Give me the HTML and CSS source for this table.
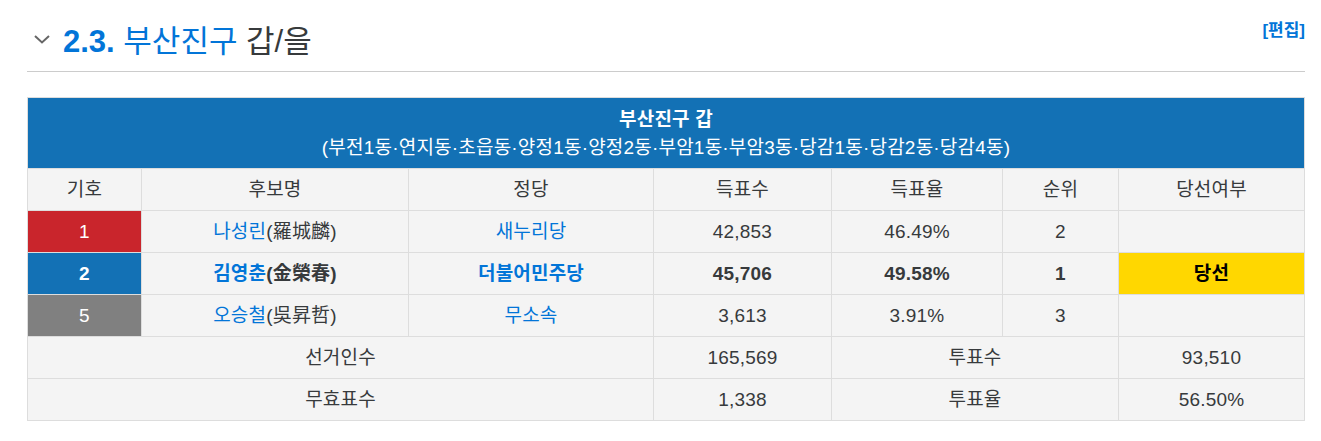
FILE: index.html
```html
<!DOCTYPE html>
<html lang="ko">
<head>
<meta charset="utf-8">
<title>2.3. 부산진구 갑/을</title>
<link rel="stylesheet" href="styles.css">
</head>
<body>
<div class="page">
  <div class="section-head">
    <svg class="chev" width="16" height="9" viewBox="0 0 16 9" aria-hidden="true"><path d="M1 1 L8 7.5 L15 1" fill="none" stroke="#666" stroke-width="2"/></svg>
    <h2 class="title"><a class="num" href="#">2.3.</a> <span class="link">부산진구</span> 갑/을</h2>
    <a class="edit" href="#">[편집]</a>
  </div>

  <table class="result">
    <colgroup>
      <col class="c1"><col class="c2"><col class="c3"><col class="c4"><col class="c5"><col class="c6"><col class="c7">
    </colgroup>
    <tr>
      <th colspan="7" class="district">
        <div class="d-name">부산진구 갑</div>
        <div class="d-dongs">(부전1동·연지동·초읍동·양정1동·양정2동·부암1동·부암3동·당감1동·당감2동·당감4동)</div>
      </th>
    </tr>
    <tr>
      <td>기호</td><td>후보명</td><td>정당</td><td>득표수</td><td>득표율</td><td>순위</td><td>당선여부</td>
    </tr>
    <tr>
      <td class="sym red">1</td>
      <td><a class="link" href="#">나성린</a>(羅城麟)</td>
      <td><a class="link" href="#">새누리당</a></td>
      <td>42,853</td><td>46.49%</td><td>2</td><td></td>
    </tr>
    <tr class="win">
      <td class="sym blue">2</td>
      <td><a class="link" href="#">김영춘</a>(金榮春)</td>
      <td><a class="link" href="#">더불어민주당</a></td>
      <td>45,706</td><td>49.58%</td><td>1</td><td class="elected">당선</td>
    </tr>
    <tr>
      <td class="sym grey">5</td>
      <td><a class="link" href="#">오승철</a>(吳昇哲)</td>
      <td><a class="link" href="#">무소속</a></td>
      <td>3,613</td><td>3.91%</td><td>3</td><td></td>
    </tr>
    <tr>
      <td colspan="3">선거인수</td><td>165,569</td><td colspan="2">투표수</td><td>93,510</td>
    </tr>
    <tr>
      <td colspan="3">무효표수</td><td>1,338</td><td colspan="2">투표율</td><td>56.50%</td>
    </tr>
  </table>
</div>
</body>
</html>
```

FILE: styles.css
```css
html, body {
  margin: 0;
  padding: 0;
  background: #fff;
}

body {
  font-family: "Liberation Sans", "Noto Sans CJK KR", sans-serif;
  color: #373a3c;
}

.page {
  padding: 0 16px 0 27px;
}

a {
  text-decoration: none;
}

.link {
  color: #0275d8;
}

.section-head {
  display: flex;
  align-items: flex-start;
  padding-top: 22px;
  padding-bottom: 9px;
  border-bottom: 1px solid #ccc;
}

.chev {
  margin: 13px 13px 0 7px;
  flex: none;
}

.title {
  margin: 0;
  font-size: 31px;
  line-height: 40px;
  font-weight: normal;
  color: #373a3c;
}

.title .num {
  color: #0275d8;
  font-weight: bold;
}

.edit {
  margin-left: auto;
  margin-top: -1px;
  font-size: 17px;
  line-height: 20px;
  font-weight: bold;
  color: #0275d8;
}

.result {
  margin-top: 25px;
  width: 1278px;
  table-layout: fixed;
  border-collapse: collapse;
  font-size: 19px;
  letter-spacing: 0.2px;
  text-align: center;
}

.c1 { width: 114px; }
.c2 { width: 267px; }
.c3 { width: 245px; }
.c4 { width: 178px; }
.c5 { width: 171px; }
.c6 { width: 116px; }
.c7 { width: 186px; }

.result td,
.result th {
  border: 1px solid #ddd;
  background: #f4f4f4;
  height: 42px;
  padding: 0 6px;
  line-height: 22px;
  vertical-align: middle;
  box-sizing: border-box;
}

.result th.district {
  background: #1371b5;
  color: #fff;
  height: auto;
  padding: 8px 6px 6px;
  line-height: 28px;
}

.d-name {
  font-weight: bold;
}

.d-dongs {
  font-weight: normal;
}

.result td.sym {
  color: #fff;
}

.result td.red { background: #c9252c; }
.result td.blue { background: #1371b5; }
.result td.grey { background: #808080; }

.win td {
  font-weight: bold;
}

.result td.elected {
  background: #ffd700;
  color: #000;
}
```
